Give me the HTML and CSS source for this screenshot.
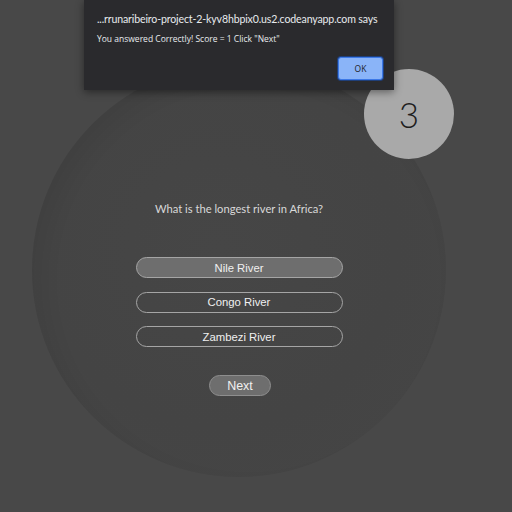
FILE: index.html
```html
<!DOCTYPE html>
<html>
<head>
<meta charset="utf-8">
<link rel="stylesheet" href="styles.css">
</head>
<body>
<main class="stage">
  <section class="quiz">
    <p class="question">What is the longest river in Africa?</p>
    <div class="options">
      <button class="option selected">Nile River</button>
      <button class="option">Congo River</button>
      <button class="option">Zambezi River</button>
    </div>
    <button class="next">Next</button>
  </section>
  <div class="score">3</div>
</main>
<div class="dialog">
  <div class="dialog-title">...rrunaribeiro-project-2-kyv8hbpix0.us2.codeanyapp.com says</div>
  <div class="dialog-msg">You answered Correctly! Score = 1 Click "Next"</div>
  <div class="dialog-actions"><button class="ok">OK</button></div>
</div>
</body>
</html>
```
FILE: styles.css
```css
html, body {
  margin: 0;
  padding: 0;
  background: #484848;
  width: 512px;
  height: 512px;
  overflow: hidden;
}
.stage {
  position: relative;
  padding: 63px 0 0 32px;
}
.quiz {
  width: 414px;
  height: 414px;
  border-radius: 50%;
  background: radial-gradient(circle at 45% 45%, #464646 0%, #444 55%, #454545 80%, #4c4c4c 100%);
  box-shadow: inset 10px 10px 20px rgba(0,0,0,0.06);
  display: flex;
  flex-direction: column;
  align-items: center;
  box-sizing: border-box;
  padding-top: 138px;
}
.question {
  margin: 0;
  font-family: "Lato", sans-serif;
  font-size: 11.2px;
  line-height: 16px;
  color: #d8d8d8;
}
.options {
  margin-top: 40px;
  display: flex;
  flex-direction: column;
  gap: 13.5px;
}
.option, .next {
  font-family: "Liberation Sans", Arial, sans-serif;
  font-size: 11.3px;
  color: #f0f0f0;
  background: transparent;
  border: 1px solid #a5a5a5;
  border-radius: 11px;
  height: 21px;
  padding: 0;
  margin: 0;
}
.option {
  width: 207px;
}
.option.selected {
  background: #6e6e6e;
}
.next {
  margin-top: 28px;
  margin-left: 2px;
  width: 62px;
  background: #6e6e6e;
  border-color: #8e8e8e;
  font-size: 12.5px;
}
.score {
  position: absolute;
  left: 364px;
  top: 69px;
  width: 90px;
  height: 90px;
  border-radius: 50%;
  background: #a9a9a9;
  color: #1e1e1e;
  font-family: "Lato", sans-serif;
  font-weight: 300;
  font-size: 35px;
  display: flex;
  align-items: center;
  justify-content: center;
}
.dialog {
  position: absolute;
  left: 84px;
  top: 0;
  width: 310px;
  height: 90px;
  box-sizing: border-box;
  background: #2a2a2d;
  box-shadow: 0 2px 8px rgba(0,0,0,0.45);
  padding: 12px 12px 0 13px;
  font-family: "Open Sans", sans-serif;
  color: #e8eaed;
}
.dialog-title {
  font-family: "Lato", sans-serif;
  font-size: 10.6px;
  letter-spacing: -0.15px;
  line-height: 14px;
  white-space: nowrap;
}
.dialog-msg {
  margin-top: 7px;
  font-size: 8.5px;
  line-height: 12px;
}
.dialog-actions {
  display: flex;
  justify-content: flex-end;
  margin-top: 12px;
}
.ok {
  width: 45px;
  height: 23px;
  background: #8ab4f8;
  border: 1px solid #3b78e7;
  border-radius: 3px;
  box-shadow: 0 0 0 1px #1f3f7a;
  font-family: "Open Sans", sans-serif;
  font-size: 8.5px;
  color: #202124;
  padding: 0;
  margin-right: -1px;
}
```
